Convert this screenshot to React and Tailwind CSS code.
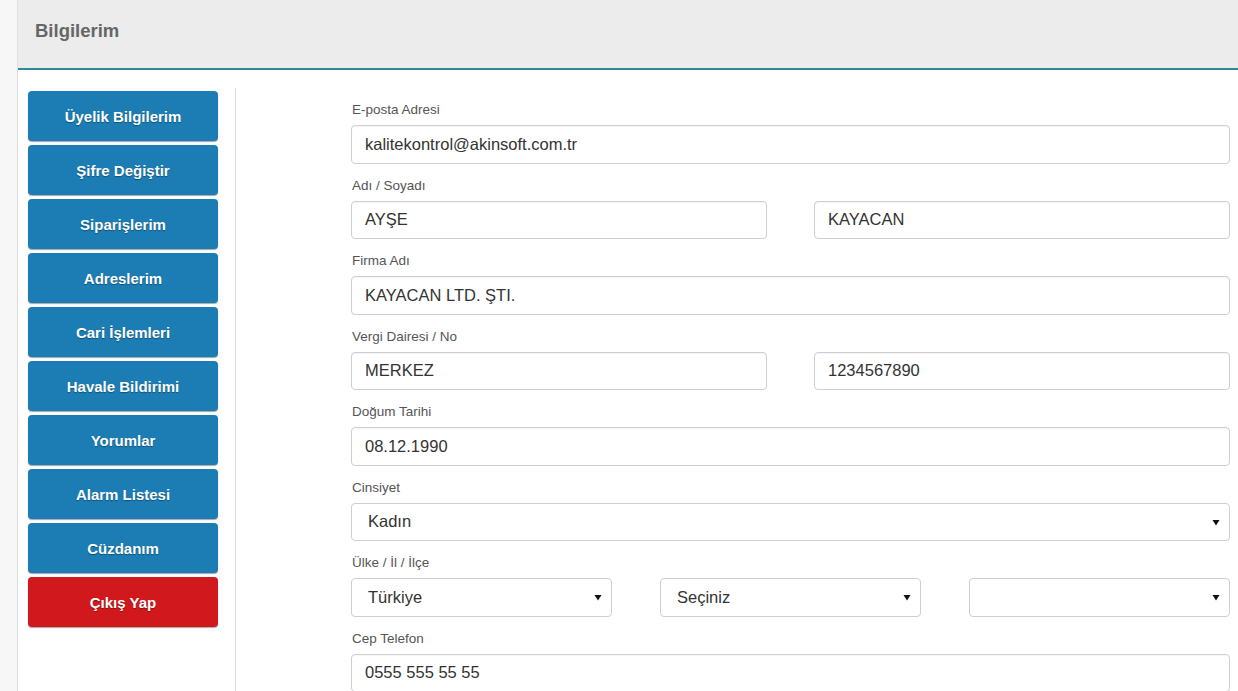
const menu = [
  'Üyelik Bilgilerim',
  'Şifre Değiştir',
  'Siparişlerim',
  'Adreslerim',
  'Cari İşlemleri',
  'Havale Bildirimi',
  'Yorumlar',
  'Alarm Listesi',
  'Cüzdanım',
]

const Label = ({ children }) => (
  <div className="h-[23px] text-[13.5px] leading-[16px] text-[#555] pl-[1px]">{children}</div>
)

const Input = ({ value }) => (
  <div className="h-[38.5px] flex items-center px-[13px] border border-[#cfcfcf] rounded-[4px] bg-white text-[16.5px] text-[#333] shadow-[inset_0_1px_1px_rgba(0,0,0,0.04)]">
    {value}
  </div>
)

const Select = ({ value }) => (
  <div className="h-[38.5px] flex items-center justify-between pl-[16px] pr-[9px] border border-[#cfcfcf] rounded-[4px] bg-white text-[16.5px] text-[#333]">
    <span>{value}</span>
    <svg width="8" height="7" viewBox="0 0 8 7" className="mt-[1px]">
      <path d="M0.5 1 L7.5 1 L4 6.5 Z" fill="#111" />
    </svg>
  </div>
)

const Group = ({ label, children }) => (
  <div className="mb-[14px]">
    <Label>{label}</Label>
    {children}
  </div>
)

export default function App() {
  return (
    <div className="min-h-screen bg-[#f7f7f7] pl-[17px]" style={{ fontFamily: '"Liberation Sans", Arial, sans-serif' }}>
      <div className="bg-white border-l border-[#dedede] min-h-screen">
        <div className="h-[70px] bg-[#ececec] border-b-2 border-[#2b8a9c] flex items-center pl-[17px] pb-[6px]">
          <h1 className="text-[18.5px] font-bold text-[#666]">Bilgilerim</h1>
        </div>

        <div className="flex">
          <div className="w-[218px] shrink-0 pt-[18px]">
            <div className="border-r border-[#dcdcdc] pr-[17px] pl-[10px] min-h-[620px] pt-[3px]">
              <div className="flex flex-col gap-[4px]">
                {menu.map((m) => (
                  <button
                    key={m}
                    className="h-[50px] w-[190px] pt-[2px] rounded-[4px] bg-[#1b7db4] text-white font-bold text-[15px] shadow-[0_1px_1px_rgba(0,0,0,0.35)] [text-shadow:0_1px_1px_rgba(0,0,0,0.35)]"
                  >
                    {m}
                  </button>
                ))}
                <button className="h-[50px] w-[190px] pt-[2px] rounded-[4px] bg-[#d1181c] text-white font-bold text-[15px] shadow-[0_1px_1px_rgba(0,0,0,0.35)] [text-shadow:0_1px_1px_rgba(0,0,0,0.35)]">
                  Çıkış Yap
                </button>
              </div>
            </div>
          </div>

          <div className="flex-1 pl-[115px] pr-[8px] pt-[32px]">
            <Group label="E-posta Adresi">
              <Input value="kalitekontrol@akinsoft.com.tr" />
            </Group>
            <Group label="Adı / Soyadı">
              <div className="grid grid-cols-2 gap-[47px]">
                <Input value="AYŞE" />
                <Input value="KAYACAN" />
              </div>
            </Group>
            <Group label="Firma Adı">
              <Input value="KAYACAN LTD. ŞTI." />
            </Group>
            <Group label="Vergi Dairesi / No">
              <div className="grid grid-cols-2 gap-[47px]">
                <Input value="MERKEZ" />
                <Input value="1234567890" />
              </div>
            </Group>
            <Group label="Doğum Tarihi">
              <Input value="08.12.1990" />
            </Group>
            <Group label="Cinsiyet">
              <Select value="Kadın" />
            </Group>
            <Group label="Ülke / İl / İlçe">
              <div className="grid grid-cols-3 gap-[48px]">
                <Select value="Türkiye" />
                <Select value="Seçiniz" />
                <Select value="" />
              </div>
            </Group>
            <Group label="Cep Telefon">
              <Input value="0555 555 55 55" />
            </Group>
          </div>
        </div>
      </div>
    </div>
  )
}
